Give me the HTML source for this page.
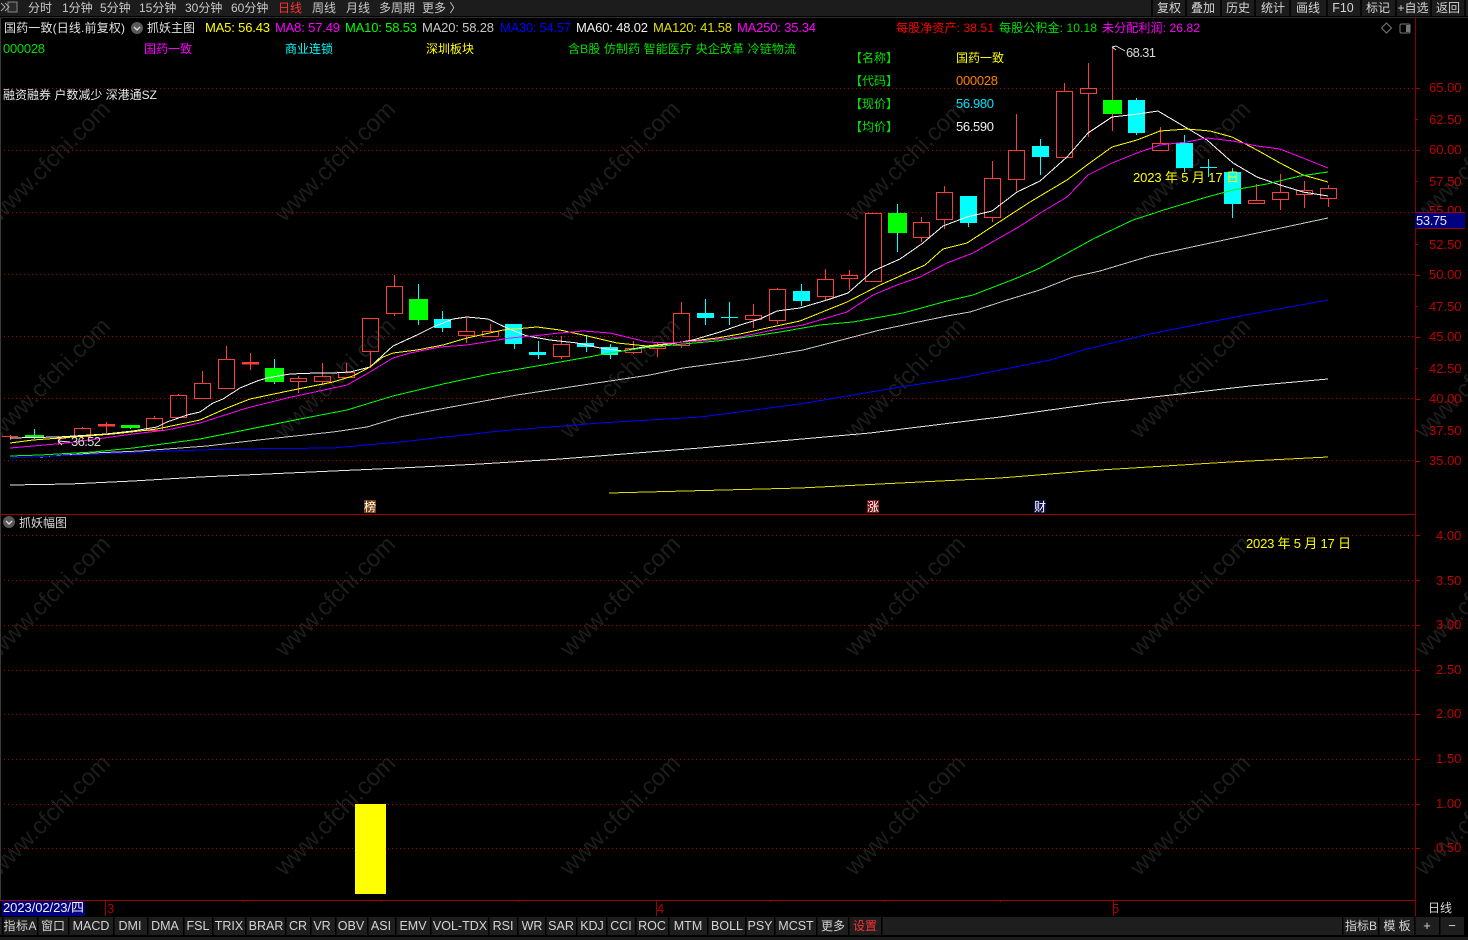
<!DOCTYPE html>
<html lang="zh"><head><meta charset="utf-8"><title>国药一致</title>
<style>
html,body{margin:0;padding:0;background:#000;width:1468px;height:940px;overflow:hidden}
svg{display:block;position:absolute;left:0;top:0}
text{font-family:"Liberation Sans","Noto Sans CJK SC",sans-serif;font-size:12px}
.l{font-size:13px}
.s{font-size:12.5px}
.ax{font-size:13px;fill:#c00000}
.wm{font-size:24px;fill:#1d1d1d;text-anchor:middle}
.b{fill:#d4d4d4;text-anchor:middle}
.t{fill:#c8c8c8}
.ma{fill:none;stroke-width:1;shape-rendering:crispEdges}
</style></head><body>
<svg width="1468" height="940" viewBox="0 0 1468 940" xmlns="http://www.w3.org/2000/svg">
<rect width="1468" height="940" fill="#000"/>
<!-- watermark -->
<g transform="translate(-3 3)">
<text class="wm" transform="rotate(-45 53 158)" x="53" y="166">www.cfchi.com</text>
<text class="wm" transform="rotate(-45 338 158)" x="338" y="166">www.cfchi.com</text>
<text class="wm" transform="rotate(-45 623 158)" x="623" y="166">www.cfchi.com</text>
<text class="wm" transform="rotate(-45 908 158)" x="908" y="166">www.cfchi.com</text>
<text class="wm" transform="rotate(-45 1193 158)" x="1193" y="166">www.cfchi.com</text>
<text class="wm" transform="rotate(-45 1478 158)" x="1478" y="166">www.cfchi.com</text>
<text class="wm" transform="rotate(-45 53 375)" x="53" y="383">www.cfchi.com</text>
<text class="wm" transform="rotate(-45 338 375)" x="338" y="383">www.cfchi.com</text>
<text class="wm" transform="rotate(-45 623 375)" x="623" y="383">www.cfchi.com</text>
<text class="wm" transform="rotate(-45 908 375)" x="908" y="383">www.cfchi.com</text>
<text class="wm" transform="rotate(-45 1193 375)" x="1193" y="383">www.cfchi.com</text>
<text class="wm" transform="rotate(-45 1478 375)" x="1478" y="383">www.cfchi.com</text>
<text class="wm" transform="rotate(-45 53 593)" x="53" y="601">www.cfchi.com</text>
<text class="wm" transform="rotate(-45 338 593)" x="338" y="601">www.cfchi.com</text>
<text class="wm" transform="rotate(-45 623 593)" x="623" y="601">www.cfchi.com</text>
<text class="wm" transform="rotate(-45 908 593)" x="908" y="601">www.cfchi.com</text>
<text class="wm" transform="rotate(-45 1193 593)" x="1193" y="601">www.cfchi.com</text>
<text class="wm" transform="rotate(-45 1478 593)" x="1478" y="601">www.cfchi.com</text>
<text class="wm" transform="rotate(-45 53 812)" x="53" y="820">www.cfchi.com</text>
<text class="wm" transform="rotate(-45 338 812)" x="338" y="820">www.cfchi.com</text>
<text class="wm" transform="rotate(-45 623 812)" x="623" y="820">www.cfchi.com</text>
<text class="wm" transform="rotate(-45 908 812)" x="908" y="820">www.cfchi.com</text>
<text class="wm" transform="rotate(-45 1193 812)" x="1193" y="820">www.cfchi.com</text>
<text class="wm" transform="rotate(-45 1478 812)" x="1478" y="820">www.cfchi.com</text>
</g>
<!-- grid -->
<path d="M0 88.5H1415M0 150.5H1415M0 212.5H1415M0 274.5H1415M0 336.5H1415M0 398.5H1415M0 460.5H1415M0 535.5H1415M0 580.5H1415M0 625.5H1415M0 670.5H1415M0 714.5H1415M0 759.5H1415M0 804.5H1415M0 848.5H1415" stroke="#b00000" stroke-width="1" stroke-dasharray="1 3" fill="none" shape-rendering="crispEdges"/>
<!-- frames -->
<path d="M0.5 18V900" stroke="#3a3a3a" fill="none" shape-rendering="crispEdges"/>
<path d="M0 514.5H1415M0 900.5H1415" stroke="#a00000" fill="none" shape-rendering="crispEdges"/>
<path d="M1415.5 18V916" stroke="#8b0000" stroke-width="1.4" fill="none" shape-rendering="crispEdges"/>
<path d="M1415 88.5h5M1415 119.5h3M1415 150.5h5M1415 181.5h3M1415 244.5h3M1415 275.5h5M1415 306.5h3M1415 337.5h5M1415 368.5h3M1415 399.5h5M1415 430.5h3M1415 461.5h5M1415 535.5h5M1415 580.5h5M1415 625.5h5M1415 670.5h5M1415 714.5h5M1415 759.5h5M1415 804.5h5M1415 848.5h5" stroke="#a00000" fill="none" shape-rendering="crispEdges"/>
<path d="M105.5 901V916M656.5 901V916M1113.5 901V916M243.5 900v2M381.5 900v2M518.5 900v2M770.5 900v2M884.5 900v2M1000.5 900v2" stroke="#a00000" fill="none" shape-rendering="crispEdges"/>
<!-- red candles -->
<path shape-rendering="crispEdges" fill="none" stroke="#ff3c3c" stroke-width="1" d="
M2 436.5H18M10.5 435V440
M50 438.5H66M58.5 436V445
M74.5 428.5H90.5V436.5H74.5ZM82.5 427V428M82.5 436.5V441
M106.5 422V433
M146.5 418.5H162.5V430.5H146.5ZM154.5 416V418
M170.5 395.5H186.5V417.5H170.5ZM178.5 394V395
M194.5 383.5H210.5V398.5H194.5ZM202.5 371V383
M218.5 359.5H234.5V388.5H218.5ZM226.5 346V359M226.5 388V389
M250.5 353V370
M290.5 378.5H306.5V381.5H290.5ZM298.5 376V378M298.5 381V393
M314.5 376.5H330.5V381.5H314.5ZM322.5 363V376M322.5 381V385
M338.5 372.5H354.5V377.5H338.5ZM346.5 363V372
M362.5 318.5H378.5V351.5H362.5ZM370.5 351V368
M386.5 286.5H402.5V313.5H386.5ZM394.5 275V286M394.5 313V316
M458.5 331.5H474.5V335.5H458.5ZM466.5 318V331M466.5 335V343
M482.5 331.5H498.5V336.5H482.5ZM490.5 324V331M490.5 336V337
M553.5 344.5H569.5V356.5H553.5ZM561.5 336V344M561.5 356V359
M625.5 348.5H641.5V352.5H625.5ZM633.5 341V348M633.5 352V354
M649.5 346.5H665.5V348.5H649.5ZM657.5 343V346M657.5 348V357
M673.5 313.5H689.5V345.5H673.5ZM681.5 302V313M681.5 345V348
M745.5 315.5H761.5V319.5H745.5ZM753.5 304V315M753.5 319V328
M769.5 289.5H785.5V320.5H769.5ZM777.5 288V289M777.5 320V324
M817.5 279.5H833.5V296.5H817.5ZM825.5 269V279M825.5 296V300
M841.5 275.5H857.5V278.5H841.5ZM849.5 270V275M849.5 278V290
M865.5 213.5H881.5V281.5H865.5Z
M913.5 222.5H929.5V237.5H913.5ZM921.5 217V222M921.5 237V242
M936.5 192.5H952.5V219.5H936.5ZM944.5 186V192M944.5 219V229
M984.5 178.5H1000.5V217.5H984.5ZM992.5 161V178M992.5 217V222
M1008.5 150.5H1024.5V179.5H1008.5ZM1016.5 114V150M1016.5 179V191
M1056.5 91.5H1072.5V157.5H1056.5ZM1064.5 83V91
M1080.5 88.5H1096.5V93.5H1080.5ZM1088.5 63V88M1088.5 93V137
M1112.5 47V131
M1152.5 143.5H1168.5V150.5H1152.5ZM1160.5 127V143
M1248.5 200.5H1264.5V203.5H1248.5ZM1256.5 184V200
M1272.5 192.5H1288.5V199.5H1272.5ZM1280.5 174V192M1280.5 199V210
M1296.5 190.5H1312.5V194.5H1296.5ZM1304.5 181V190M1304.5 194V208
M1320.5 188.5H1336.5V198.5H1320.5ZM1328.5 185V188M1328.5 198V207"/>
<path shape-rendering="crispEdges" fill="#ff3c3c" d="M98 424h17v2.5H98ZM242 362h17v2.5h-17Z"/>
<!-- cyan wicks/bodies -->
<path shape-rendering="crispEdges" fill="none" stroke="#00ffff" d="M34.5 429V439M130.5 425V429M274.5 359V384M418.5 284V325M442.5 311V332M514.5 324V349M538.5 341V359M586.5 335V352M610.5 344V359M705.5 299V325M729.5 302V325M721 317.5H738M801.5 284V306M897.5 204V252M968.5 196V227M1040.5 139V175M1136.5 98V135M1184.5 135V172M1208.5 159V177M1200 167.5H1217M1232.5 168V218"/>
<path shape-rendering="crispEdges" fill="#00ffff" d="M434 319h17v9h-17ZM505 324h17v20h-17ZM529 352h17v3h-17ZM577 343h17v4h-17ZM601 347h17v8h-17ZM697 313h17v5h-17ZM793 291h17v10h-17ZM960 196h17v27h-17ZM1032 146h17v11h-17ZM1128 100h17v33h-17ZM1176 143h17v25h-17ZM1224 172h17v32h-17Z"/>
<path shape-rendering="crispEdges" fill="#00ff00" d="M25 435h19v3H25ZM121 425h19v3h-19ZM265 368h19v14h-19ZM409 299h19v21h-19ZM888 213h19v20h-19ZM1103 100h19v14h-19Z"/>
<!-- moving averages -->
<polyline class="ma" stroke="#fff" points="10,438 58,437 106,434 133,431 157,427 167,422 187,415 200,412 213,403 223,399 240,388 257,381 267,378 290,374 317,373 333,373 350,372 370,367 383,355 393,346 417,335 433,327 453,319 467,317 488,319 507,328 527,336 550,340 577,343 600,348 623,351 643,347 670,344 693,340 720,332 740,325 760,319 777,311 800,308 827,300 848,293 873,271 900,259 923,243 943,226 967,217 992,211 1017,192 1040,181 1067,157 1088,133 1112,117 1138,114 1158,111 1180,124 1207,140 1233,163 1257,177 1280,185 1303,192 1328,196"/>
<polyline class="ma" stroke="#ffff00" points="10,443 33,440 60,438 113,434 157,429 200,420 227,408 250,399 293,390 333,382 353,376 370,367 383,357 393,353 417,350 443,345 467,338 503,330 537,327 560,330 583,335 617,343 647,346 683,342 717,338 740,334 767,328 800,321 847,302 880,285 925,265 943,249 967,243 990,228 1030,202 1067,180 1087,165 1112,147 1137,140 1160,131 1187,129 1210,131 1232,137 1257,150 1280,163 1303,175 1328,182"/>
<polyline class="ma" stroke="#ff00ff" points="10,448 33,446 67,443 133,434 167,430 200,423 247,408 287,398 347,385 370,372 393,358 410,353 440,347 467,345 510,338 533,336 560,333 583,331 610,333 647,342 670,343 700,341 740,337 773,330 803,325 847,312 873,295 897,285 920,277 947,263 973,253 1017,228 1042,212 1067,197 1088,175 1112,163 1137,153 1160,145 1187,142 1207,138 1233,141 1257,146 1280,149 1303,158 1328,168"/>
<polyline class="ma" stroke="#00ff00" points="10,456 40,455 93,452 133,448 200,439 260,427 300,419 347,410 393,396 443,384 490,374 537,366 583,358 610,353 643,348 683,344 717,341 740,338 780,332 820,325 853,322 903,313 947,301 973,295 1017,278 1040,268 1073,250 1093,239 1133,220 1167,209 1207,197 1233,190 1267,184 1300,176 1328,172"/>
<polyline class="ma" stroke="#c8c8c8" points="40,457 93,453 140,451 207,446 267,439 333,432 367,427 400,417 435,410 517,395 583,385 650,375 683,368 750,359 803,350 880,330 947,316 970,312 1007,300 1040,290 1073,277 1100,271 1150,256 1229,239 1328,218"/>
<polyline class="ma" stroke="#0000ff" points="10,458 100,454 140,452 233,449 333,448 400,442 500,431 600,423 700,417 800,404 900,387 960,378 1050,360 1083,350 1150,334 1240,316 1328,300"/>
<polyline class="ma" stroke="#e6e6e6" points="10,485 70,484 133,481 200,477 267,474 333,471 400,468 480,464 560,459 700,448 870,433 1000,417 1100,403 1180,394 1250,386 1328,379"/>
<polyline class="ma" stroke="#e0e000" points="609,493 800,488 1000,478 1100,470 1230,462 1328,457"/>
<!-- high / low marks -->
<path d="M1112 47l4-1 9 5M1112 47l4 3" stroke="#e0e0e0" fill="none"/>
<text class="l" x="1126" y="57" fill="#d8d8d8" textLength="30">68.31</text>
<path d="M58 441l12 1M58 441l4-4M58 441l4 4" stroke="#e0e0e0" fill="none"/>
<text class="l" x="71" y="446" fill="#d8d8d8" textLength="30">36.52</text>
<!-- yellow bar -->
<rect x="355" y="804" width="31" height="90" fill="#ffff00"/>
<!-- date labels -->
<text x="1133" y="182" fill="#ffff00" textLength="106" class="l">2023 年 5 月 17 日</text>
<text x="1246" y="548" fill="#ffff00" textLength="105" class="l">2023 年 5 月 17 日</text>
<!-- event markers -->
<rect x="364" y="500" width="12" height="13" fill="#7a3d0c"/><text x="364" y="511" fill="#fff">榜</text>
<rect x="867" y="500" width="12" height="13" fill="#7a0f0f"/><text x="867" y="511" fill="#fff">涨</text>
<rect x="1034" y="500" width="12" height="13" fill="#10104a"/><text x="1034" y="511" fill="#fff">财</text>
<!-- axis labels -->
<text class="ax" x="1429" y="92">65.00</text><text class="ax" x="1429" y="124">62.50</text><text class="ax" x="1429" y="154">60.00</text><text class="ax" x="1429" y="186">57.50</text><text class="ax" x="1429" y="215">55.00</text><text class="ax" x="1429" y="249">52.50</text><text class="ax" x="1429" y="279">50.00</text><text class="ax" x="1429" y="311">47.50</text><text class="ax" x="1429" y="341">45.00</text><text class="ax" x="1429" y="373">42.50</text><text class="ax" x="1429" y="403">40.00</text><text class="ax" x="1429" y="435">37.50</text><text class="ax" x="1429" y="465">35.00</text>
<text class="ax" x="1436" y="540">4.00</text><text class="ax" x="1436" y="585">3.50</text><text class="ax" x="1436" y="629">3.00</text><text class="ax" x="1436" y="674">2.50</text><text class="ax" x="1436" y="718">2.00</text><text class="ax" x="1436" y="763">1.50</text><text class="ax" x="1436" y="808">1.00</text><text class="ax" x="1436" y="852">0.50</text>
<rect x="1415" y="212" width="50" height="16" fill="#000080"/><path d="M1415 212.5H1465M1415 228.5H1465" stroke="#a00000" shape-rendering="crispEdges"/>
<text class="l" x="1416" y="225" fill="#e8e8e8" textLength="31">53.75</text>
<!-- top bar -->
<rect width="1468" height="16" fill="#1c1c1c"/><rect y="17" width="1468" height="1" fill="#2e2e2e"/>
<rect x="8" y="2" width="9" height="10" fill="#2a2a2a" stroke="#888" stroke-width="1"/><path d="M1 3l4 4-4 4M5 3l4 4-4 4" stroke="#aaa" fill="none"/>
<g class="t">
<text x="28" y="12" fill="#c8c8c8">分时</text>
<text x="62" y="12" fill="#c8c8c8">1分钟</text>
<text x="100" y="12" fill="#c8c8c8">5分钟</text>
<text x="139" y="12" fill="#c8c8c8">15分钟</text>
<text x="185" y="12" fill="#c8c8c8">30分钟</text>
<text x="231" y="12" fill="#c8c8c8">60分钟</text>
<text x="278" y="12" fill="#ff3232">日线</text>
<text x="312" y="12" fill="#c8c8c8">周线</text>
<text x="346" y="12" fill="#c8c8c8">月线</text>
<text x="379" y="12" fill="#c8c8c8">多周期</text>
<text x="422" y="12" fill="#c8c8c8">更多 〉</text>
</g>
<path d="M1152 0v16M1186 0v16M1221 0v16M1255 0v16M1290 0v16M1327 0v16M1361 0v16M1396 0v16M1431 0v16M1465 0v16" stroke="#000" stroke-width="1.5"/>
<text class="b" x="1169" y="12">复权</text><text class="b" x="1203" y="12">叠加</text><text class="b" x="1238" y="12">历史</text><text class="b" x="1273" y="12">统计</text><text class="b" x="1308" y="12">画线</text><text class="b s" x="1343" y="12">F10</text><text class="b" x="1378" y="12">标记</text><text class="b" x="1413" y="12">+自选</text><text class="b" x="1448" y="12">返回</text>
<!-- title row -->
<text x="4" y="32" fill="#e0e0e0" textLength="121">国药一致(日线.前复权)</text>
<circle cx="137" cy="28" r="6" fill="#5a5a5a"/><path d="M134 27l3 3 3-3" stroke="#ddd" fill="none" stroke-width="1.3"/>
<text x="147" y="32" fill="#e0e0e0">抓妖主图</text>
<text class="l" x="205" y="32" fill="#ffff00" textLength="65">MA5: 56.43</text>
<text class="l" x="275" y="32" fill="#ff00ff" textLength="65">MA8: 57.49</text>
<text class="l" x="345" y="32" fill="#00ff00" textLength="72">MA10: 58.53</text>
<text class="l" x="422" y="32" fill="#c8c8c8" textLength="72">MA20: 58.28</text>
<text class="l" x="500" y="32" fill="#0000ff" textLength="71">MA30: 54.57</text>
<text class="l" x="576" y="32" fill="#f0f0f0" textLength="72">MA60: 48.02</text>
<text class="l" x="653" y="32" fill="#e0e000" textLength="79">MA120: 41.58</text>
<text class="l" x="737" y="32" fill="#ff00ff" textLength="79">MA250: 35.34</text>
<text x="896" y="32" fill="#ff0000" textLength="98">每股净资产: 38.51</text>
<text x="999" y="32" fill="#00e000" textLength="98">每股公积金: 10.18</text>
<text x="1102" y="32" fill="#ff00ff" textLength="98">未分配利润: 26.82</text>
<path d="M1386.5 23l5 5-5 5-5-5Z" stroke="#777" fill="none"/>
<rect x="1400" y="24" width="10" height="9" rx="1.5" fill="none" stroke="#777"/><rect x="1406" y="25" width="4" height="7" fill="#777"/>
<!-- row 3 -->
<text class="l" x="3" y="53" fill="#00e000" textLength="42">000028</text>
<text x="144" y="53" fill="#ff00ff">国药一致</text>
<text x="285" y="53" fill="#00ffff">商业连锁</text>
<text x="426" y="53" fill="#ffff00">深圳板块</text>
<text x="568" y="53" fill="#00e000" textLength="228">含B股 仿制药 智能医疗 央企改革 冷链物流</text>
<text x="3" y="99" fill="#e8e8e8" textLength="154">融资融券 户数减少 深港通SZ</text>
<!-- info -->
<text x="850" y="62" fill="#00e000">【名称】</text><text x="956" y="62" fill="#ffff00">国药一致</text>
<text x="850" y="85" fill="#00e000">【代码】</text><text class="l" x="956" y="85" fill="#ff8000" textLength="42">000028</text>
<text x="850" y="108" fill="#00e000">【现价】</text><text class="l" x="956" y="108" fill="#00e5ff" textLength="38">56.980</text>
<text x="850" y="131" fill="#00e000">【均价】</text><text class="l" x="956" y="131" fill="#f0f0f0" textLength="38">56.590</text>
<!-- lower pane title -->
<circle cx="9" cy="522" r="6" fill="#5a5a5a"/><path d="M6 521l3 3 3-3" stroke="#ddd" fill="none" stroke-width="1.3"/>
<text x="19" y="527" fill="#d8d8d8">抓妖幅图</text>
<!-- date row -->
<rect x="2" y="901" width="83" height="15" fill="#000080"/>
<text class="l" x="3" y="912" fill="#f0f0f0" textLength="81">2023/02/23/四</text>
<text class="l" x="107" y="913" fill="#b00000">3</text>
<text class="l" x="657" y="913" fill="#b00000">4</text>
<text class="l" x="1112" y="913" fill="#b00000">5</text>
<text x="1428" y="912" fill="#d8d8d8">日线</text>
<!-- bottom buttons -->
<rect x="0" y="917" width="1468" height="18" fill="#1e1e1e"/>
<rect x="0" y="937" width="1468" height="3" fill="#1c1c1c"/>
<path d="M2.5 917v18M37.5 917v18M68.5 917v18M113.5 917v18M147.5 917v18M183.5 917v18M212.5 917v18M245.5 917v18M285.5 917v18M310.5 917v18M335.5 917v18M367.5 917v18M395.5 917v18M430.5 917v18M488.5 917v18M517.5 917v18M545.5 917v18M576.5 917v18M606.5 917v18M635.5 917v18M668.5 917v18M707.5 917v18M745.5 917v18M774.5 917v18M816.5 917v18M848.5 917v18M881.5 917v18M1342.5 917v18M1378.5 917v18M1414.5 917v18M1439.5 917v18M1464.5 917v18" stroke="#000" stroke-width="1.5" shape-rendering="crispEdges"/>
<rect x="1465" y="917" width="3" height="18" fill="#000"/>
<text class="b" x="20" y="930" textLength="33">指标A</text><text class="b" x="53" y="930">窗口</text>
<g>
<text class="b s" x="91" y="930">MACD</text><text class="b s" x="130" y="930">DMI</text><text class="b s" x="165" y="930">DMA</text><text class="b s" x="198" y="930">FSL</text><text class="b s" x="229" y="930">TRIX</text><text class="b s" x="266" y="930">BRAR</text><text class="b s" x="298" y="930">CR</text><text class="b s" x="322" y="930">VR</text><text class="b s" x="351" y="930">OBV</text><text class="b s" x="381" y="930">ASI</text><text class="b s" x="413" y="930">EMV</text><text class="b s" x="460" y="930">VOL-TDX</text><text class="b s" x="503" y="930">RSI</text><text class="b s" x="532" y="930">WR</text><text class="b s" x="561" y="930">SAR</text><text class="b s" x="592" y="930">KDJ</text><text class="b s" x="621" y="930">CCI</text><text class="b s" x="652" y="930">ROC</text><text class="b s" x="688" y="930">MTM</text><text class="b s" x="727" y="930">BOLL</text><text class="b s" x="760" y="930">PSY</text><text class="b s" x="796" y="930">MCST</text>
</g>
<text class="b" x="833" y="930">更多</text>
<text x="865" y="930" fill="#ff3232" text-anchor="middle">设置</text>
<text class="b" x="1361" y="930" textLength="32">指标B</text><text class="b" x="1397" y="930">模 板</text>
<text class="b l" x="1427" y="930">+</text><text class="b l" x="1452" y="930">−</text>
</svg>
</body></html>
